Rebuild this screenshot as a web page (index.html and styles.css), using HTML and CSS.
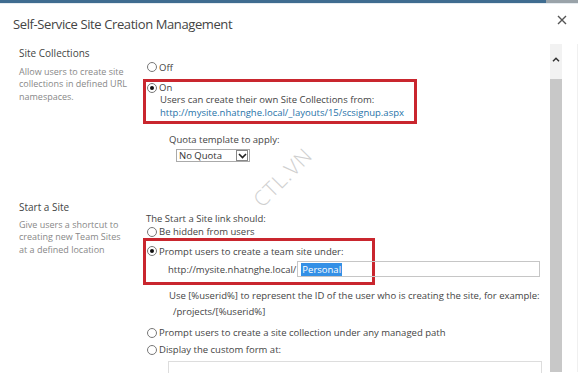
FILE: index.html
```html
<!DOCTYPE html>
<html lang="en">
<head>
    <meta charset="UTF-8">
    <title>Self-Service Site Creation Management</title>
    <link rel="stylesheet" href="styles.css">
</head>
<body>
    <div class="topbar">
        <div class="topbar-blue"></div>
        <div class="topbar-end"></div>
    </div>

    <div class="title-row">
        <h1>Self-Service Site Creation Management</h1>
        <svg class="close" width="10" height="10" viewBox="0 0 10 10">
            <path d="M1 1 L9 9 M9 1 L1 9" stroke="#555" stroke-width="1.4" fill="none"/>
        </svg>
    </div>

    <div class="dialog-body">
        <div class="content">
            <!-- Site Collections -->
            <div class="section first">
                <div class="info">
                    <h2>Site Collections</h2>
                    <p>Allow users to create site<br>collections in defined URL<br>namespaces.</p>
                </div>
                <div class="controls">
                    <div class="option off-row"><span class="radio"></span>Off</div>
                    <div class="highlight box-one">
                        <div class="option on-row"><span class="radio checked"></span>On</div>
                        <div class="note">Users can create their own Site Collections from:</div>
                        <a class="note link" href="#">http://mysite.nhatnghe.local/_layouts/15/scsignup.aspx</a>
                    </div>
                    <div class="quota">
                        <div class="quota-label">Quota template to apply:</div>
                        <div class="select">
                            <span class="select-text">No Quota</span>
                            <span class="select-btn">
                                <svg width="9" height="6" viewBox="0 0 9 6">
                                    <path d="M1 1 L4.5 4.5 L8 1" stroke="#222" stroke-width="1.6" fill="none"/>
                                </svg>
                            </span>
                        </div>
                    </div>
                </div>
            </div>

            <!-- Start a Site -->
            <div class="section second">
                <div class="info">
                    <h2>Start a Site</h2>
                    <p>Give users a shortcut to<br>creating new Team Sites<br>at a defined location</p>
                </div>
                <div class="controls">
                    <div class="lead">The Start a Site link should:</div>
                    <div class="option hidden-row"><span class="radio"></span>Be hidden from users</div>
                    <div class="highlight box-two">
                        <div class="option prompt-row"><span class="radio checked"></span>Prompt users to create a team site under:</div>
                        <div class="url-row">
                            <span>http://mysite.nhatnghe.local/</span>
                            <div class="text-input wide"><span class="selected">Personal</span></div>
                        </div>
                    </div>
                    <div class="hint">Use [%userid%] to represent the ID of the user who is creating the site, for example:</div>
                    <div class="hint example">/projects/[%userid%]</div>
                    <div class="option row-tall first-tall"><span class="radio"></span>Prompt users to create a site collection under any managed path</div>
                    <div class="option row-tall"><span class="radio"></span>Display the custom form at:</div>
                    <div class="text-input form-input"></div>
                </div>
            </div>

            <span class="watermark">CTL.VN</span>
        </div>

        <div class="scrollbar">
            <div class="scroll-up">
                <svg width="8" height="5" viewBox="0 0 8 5">
                    <path d="M1 4.2 L4 1.2 L7 4.2" stroke="#333" stroke-width="1.5" fill="none"/>
                </svg>
            </div>
        </div>
        <div class="edge"></div>
    </div>
</body>
</html>
```

FILE: styles.css
```css
* {
    box-sizing: border-box;
}

body {
    margin: 0;
    width: 578px;
    height: 373px;
    overflow: hidden;
    background: #fff;
    font-family: "Open Sans", "Liberation Sans", sans-serif;
    font-size: 9.5px;
    color: #444;
}

.topbar {
    display: flex;
    height: 4px;
    border-bottom: 1px solid #e6ecf1;
}

.topbar-blue {
    flex: 1;
    background: #3f6c90;
}

.topbar-end {
    width: 32px;
    background: #9aa3a9;
}

.title-row {
    display: flex;
    justify-content: space-between;
    align-items: center;
    height: 40px;
    padding: 0 11px 0 13px;
}

h1 {
    margin: 0;
    font-size: 13px;
    font-weight: 400;
    color: #444;
    letter-spacing: -0.4px;
}

.close {
    margin-top: -8px;
}

.dialog-body {
    display: flex;
    height: 328px;
}

.content {
    position: relative;
    flex: 1;
    padding-left: 19px;
}

.section {
    display: flex;
}

.section.second {
    margin-top: 38px;
}

.info {
    width: 124px;
}

h2 {
    margin: 2px 0 0;
    font-size: 10px;
    font-weight: 400;
    line-height: 14px;
    color: #444;
}

.section.second h2 {
    margin-top: 0;
}

.info p {
    margin: 6px 0 0;
    font-size: 9px;
    line-height: 12.3px;
    color: #888;
}

.section.second .info p {
    margin-top: 5px;
}

.controls {
    flex: 1;
}

.option {
    display: flex;
    align-items: center;
    padding-left: 4px;
}

.radio {
    display: inline-block;
    width: 10px;
    height: 10px;
    margin-right: 2px;
    border: 1px solid #777;
    border-radius: 50%;
    background: #fff;
    position: relative;
}

.radio.checked::after {
    content: "";
    position: absolute;
    left: 2px;
    top: 2px;
    width: 4px;
    height: 4px;
    border-radius: 50%;
    background: #111;
}

.off-row {
    margin-top: 14px;
    height: 18px;
}

.highlight {
    border: 3px solid #c9262e;
}

.highlight .option {
    padding-left: 1px;
}

.box-one {
    margin-top: 3px;
    width: 274px;
    padding-bottom: 2px;
}

.on-row {
    height: 11px;
}

.note {
    display: block;
    padding-left: 14px;
    line-height: 13px;
}

.link {
    color: #2672a8;
    text-decoration: none;
}

.quota {
    margin-top: 9px;
    padding-left: 26px;
}

.quota-label {
    line-height: 13px;
}

.select {
    display: flex;
    align-items: center;
    width: 74px;
    height: 13px;
    margin: 3px 0 0 7px;
    border: 1px solid #aaa;
}

.select-text {
    flex: 1;
    padding-left: 2px;
    line-height: 11px;
    color: #333;
}

.select-btn {
    display: flex;
    align-items: center;
    justify-content: center;
    width: 12px;
    height: 11px;
    margin-right: 1px;
    border: 1px solid #888;
}

.lead {
    margin-top: 12px;
    padding-left: 3px;
    line-height: 13px;
}

.hidden-row {
    height: 13px;
}

.box-two {
    width: 232px;
    padding: 3px 0 5px;
}

.prompt-row {
    height: 14px;
}

.url-row {
    display: flex;
    align-items: center;
    margin-top: 3px;
    padding-left: 22px;
    white-space: nowrap;
}

.text-input {
    height: 16px;
    border: 1px solid #c6c6c6;
    background: transparent;
}

.text-input.wide {
    width: 243px;
    margin-left: 1px;
    flex-shrink: 0;
    padding: 1px 0 0 3px;
}

.selected {
    display: inline-block;
    padding: 0 1px;
    line-height: 13px;
    background: #3390e6;
    color: #fff;
}

.hint {
    margin-top: 4px;
    padding-left: 26px;
    line-height: 14px;
}

.hint.example {
    margin-top: 2px;
    padding-left: 30px;
}

.row-tall {
    height: 17px;
}

.first-tall {
    margin-top: 5px;
}

.form-input {
    width: 374px;
    height: 24px;
    margin: 3px 0 0 25px;
    border-color: #ddd;
}

.watermark {
    position: absolute;
    left: 246px;
    top: 119px;
    font-size: 21px;
    font-weight: 300;
    color: #cfcfcf;
    letter-spacing: 1px;
    transform: rotate(-45deg);
}

.scrollbar {
    width: 12px;
    background: #c8c8c8;
}

.scroll-up {
    display: flex;
    justify-content: center;
    padding-top: 13px;
    height: 35px;
    background: #f2f2f2;
}

.edge {
    width: 16px;
    border-right: 1px solid #f0f0f0;
}
```
